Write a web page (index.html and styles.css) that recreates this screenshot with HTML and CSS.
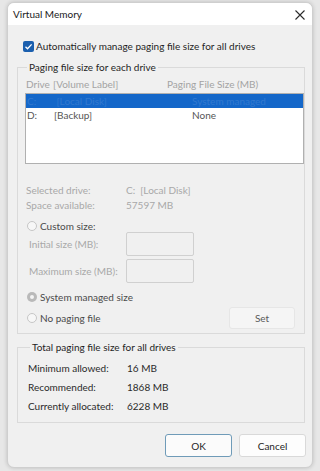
FILE: index.html
```html
<!DOCTYPE html>
<html>
<head>
<meta charset="utf-8">
<link rel="stylesheet" href="styles.css">
</head>
<body>
<div class="window">
  <div class="titlebar">
    <span class="title">Virtual Memory</span>
    <svg class="close" width="10" height="10" viewBox="0 0 10 10"><path d="M0.5 0.5L9.5 9.5M9.5 0.5L0.5 9.5" stroke="#2b2b2b" stroke-width="1.1" fill="none"/></svg>
  </div>
  <div class="content">
    <div class="check-row">
      <span class="checkbox"><svg width="11" height="11" viewBox="0 0 11 11"><path d="M2.5 5.8L4.5 7.8L8.6 3.4" stroke="#fff" stroke-width="1.3" fill="none"/></svg></span>
      <span class="dark">Automatically manage paging file size for all drives</span>
    </div>
    <fieldset class="group g1">
      <legend>Paging file size for each drive</legend>
      <div class="cols header">
        <span class="c1">Drive</span><span class="c2">[Volume Label]</span><span class="c3">Paging File Size (MB)</span>
      </div>
      <div class="listbox">
        <div class="cols row selected">
          <span class="c1">C:</span><span class="c2">&nbsp;[Local Disk]</span><span class="c3">System managed</span>
        </div>
        <div class="cols row">
          <span class="c1">D:</span><span class="c2">[Backup]</span><span class="c3">None</span>
        </div>
      </div>
      <div class="info">
        <div class="info-row"><span class="info-label">Selected drive:</span><span>C:&nbsp; [Local Disk]</span></div>
        <div class="info-row"><span class="info-label">Space available:</span><span>57597 MB</span></div>
      </div>
      <div class="radio-row custom">
        <span class="radio"></span><span class="mid">Custom size:</span>
      </div>
      <div class="field-row first">
        <span class="field-label">Initial size (MB):</span><span class="input"></span>
      </div>
      <div class="field-row">
        <span class="field-label">Maximum size (MB):</span><span class="input"></span>
      </div>
      <div class="radio-row sys">
        <span class="radio checked"></span><span class="mid">System managed size</span>
      </div>
      <div class="radio-row nopage">
        <span class="radio"></span><span class="mid">No paging file</span>
        <span class="btn set">Set</span>
      </div>
    </fieldset>
    <fieldset class="group g2">
      <legend>Total paging file size for all drives</legend>
      <div class="total-row"><span class="total-label">Minimum allowed:</span><span>16 MB</span></div>
      <div class="total-row"><span class="total-label">Recommended:</span><span>1868 MB</span></div>
      <div class="total-row"><span class="total-label">Currently allocated:</span><span>6228 MB</span></div>
    </fieldset>
    <div class="buttons">
      <span class="btn ok">OK</span>
      <span class="btn cancel">Cancel</span>
    </div>
  </div>
</div>
</body>
</html>
```
FILE: styles.css
```css
html, body {
  margin: 0;
  padding: 0;
}
body {
  background: #e7e7e7;
  width: 320px;
  height: 471px;
  overflow: hidden;
  padding: 2px 0 0 7px;
  box-sizing: border-box;
  font-family: "Lato", "Noto Sans", sans-serif;
  font-size: 10px;
  color: #1f1f1f;
}
.window {
  width: 306px;
  height: 466px;
  box-sizing: border-box;
  border: 1px solid #cfcfcf;
  border-radius: 7px;
  background: #f0f0f0;
  overflow: hidden;
  box-shadow: 0 0 4px rgba(0,0,0,0.18);
  display: flex;
  flex-direction: column;
}
.titlebar {
  height: 22px;
  background: #ffffff;
  display: flex;
  align-items: center;
  justify-content: space-between;
  padding: 0 7px 0 5px;
  flex: none;
}
.title {
  font-size: 10px;
  color: #1a1a1a;
}
.close {
  display: block;
  margin-top: 1px;
}
.content {
  padding: 0 7px 0 9px;
  display: flex;
  flex-direction: column;
}
.check-row {
  margin-top: 14px;
  height: 14px;
  display: flex;
  align-items: center;
  padding-left: 6px;
}
.checkbox {
  width: 11px;
  height: 11px;
  border-radius: 2px;
  background: #1b5fae;
  margin-right: 2px;
  display: block;
}
.checkbox svg { display: block; }
.dark { color: #1f1f1f; }
.mid { color: #4a4a4a; }

.group {
  margin: 0;
  border: 1px solid #dadada;
  min-width: 0;
}
.group legend {
  padding: 0 2px;
  margin-left: 2px;
  line-height: 14px;
  color: #1f1f1f;
}
.g1 {
  margin-top: 7px;
  padding: 0 1px 4px 7px;
}
.cols {
  display: flex;
  align-items: center;
}
.c1 { width: 27px; flex: none; }
.c2 { width: 138px; flex: none; }
.header {
  margin-top: 3px;
  height: 14px;
  padding-left: 1px;
  color: #a3a3a3;
}
.header .c1 { width: 27px; }
.header .c2 { width: 114px; }
.listbox {
  margin-top: 2px;
  width: 279px;
  height: 71px;
  box-sizing: border-box;
  border: 1px solid #b0b0b0;
  background: #ffffff;
}
.row {
  height: 14px;
  padding-left: 1px;
  color: #555555;
}
.row.selected {
  background: #1467c9;
  color: #3279cf;
}
.info {
  margin-top: 18px;
  color: #a8a8a8;
  padding-left: 1px;
}
.info-row {
  height: 15px;
  display: flex;
  align-items: center;
}
.info-label {
  width: 100px;
  flex: none;
}
.radio-row {
  display: flex;
  align-items: center;
  padding-left: 2px;
}
.radio {
  width: 10px;
  height: 10px;
  box-sizing: border-box;
  border-radius: 50%;
  border: 1px solid #c6c6c6;
  background: #f7f7f7;
  margin-right: 3px;
  flex: none;
  position: relative;
}
.radio.checked {
  border: none;
  background: #b9b9b9;
}
.radio.checked::after {
  content: "";
  position: absolute;
  left: 3px;
  top: 3px;
  width: 4px;
  height: 4px;
  border-radius: 50%;
  background: #f4f4f4;
}
.custom {
  margin-top: 7px;
  height: 13px;
}
.field-row {
  display: flex;
  align-items: center;
  height: 24px;
  padding-left: 4px;
  color: #a8a8a8;
}
.field-row.first { margin-top: 0; }
.field-row + .field-row { margin-top: 3px; }
.field-label {
  width: 97px;
  flex: none;
}
.input {
  width: 68px;
  height: 24px;
  box-sizing: border-box;
  border: 1px solid #d0d0d0;
  border-radius: 2px;
  background: #f0f0f0;
}
.sys {
  margin-top: 7px;
  height: 14px;
}
.nopage {
  margin-top: 3px;
  height: 22px;
}
.btn {
  display: flex;
  align-items: center;
  justify-content: center;
  box-sizing: border-box;
  border-radius: 3px;
}
.set {
  margin-left: auto;
  margin-right: 8px;
  width: 66px;
  height: 22px;
  border: 1px solid #e6e6e6;
  background: #f5f5f5;
  color: #5a5a5a;
}
.g2 {
  margin-top: 6px;
  padding: 0 8px 7px 10px;
}
.g2 legend { margin-left: 2px; }
.total-row {
  display: flex;
  align-items: center;
  height: 19px;
  color: #2a2a2a;
}
.total-row:first-of-type { margin-top: 4px; }
.total-label {
  width: 99px;
  flex: none;
}
.buttons {
  margin-top: 11px;
  display: flex;
  justify-content: flex-end;
  gap: 7px;
  margin-right: -1px;
}
.ok, .cancel {
  width: 67px;
  height: 23px;
  color: #1f1f1f;
}
.ok {
  border: 1px solid #6f9bb8;
  background: #fbfbfb;
}
.cancel {
  border: 1px solid #d9d9d9;
  background: #fdfdfd;
}
```
